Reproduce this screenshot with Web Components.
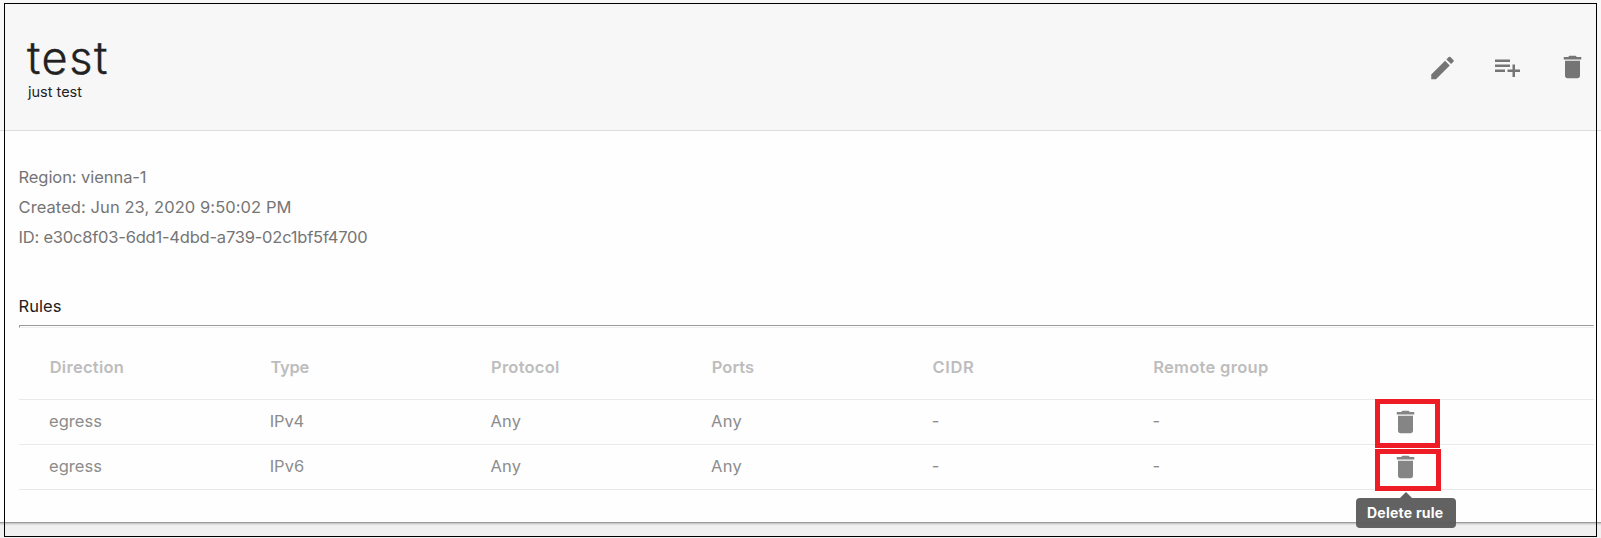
<!DOCTYPE html>
<html lang="en">
<head>
<meta charset="utf-8">
<title>Security group</title>
<style>
html,body{margin:0;height:538px;overflow:hidden;background:#f0f0f0}
body{font-family:Inter,"Open Sans","Liberation Sans",sans-serif;color:#212121}
</style>
</head>
<body>
<group-page></group-page>
<script>
const define = (name, html, ready) => customElements.define(name, class extends HTMLElement {
  connectedCallback() {
    if (this.shadowRoot) return;
    const t = document.createElement('template');
    t.innerHTML = html;
    this.attachShadow({mode: 'open'}).append(t.content.cloneNode(true));
    if (ready) ready(this, this.shadowRoot);
  }
});

// Text tracked so that it fills the width given in its "w" attribute.
define('fit-text', `<style>:host{display:block;white-space:nowrap}span{display:inline-block}</style><span><slot></slot></span>`, (el, root) => {
  const s = root.querySelector('span');
  const n = Number(el.getAttribute('n')) || el.textContent.length, w = parseFloat(el.getAttribute('w'));
  if (w) s.style.letterSpacing = ((w - s.getBoundingClientRect().width) / n).toFixed(3) + 'px';
});

const ICONS = {
  edit: 'M3 17.25V21h3.75L17.81 9.94l-3.75-3.75L3 17.25zM20.71 7.04a1 1 0 0 0 0-1.41l-2.34-2.34a1 1 0 0 0-1.41 0l-1.83 1.83 3.75 3.75 1.83-1.83z',
  add: 'M14 10H2v2h12v-2zm0-4H2v2h12V6zm4 8v-4h-2v4h-4v2h4v4h2v-4h4v-2h-4zM2 16h8v-2H2v2z',
  delete: 'M6 19c0 1.1.9 2 2 2h8c1.1 0 2-.9 2-2V7H6v12zM19 4h-3.5l-1-1h-5l-1 1H5v2h14V4z'
};
define('md-icon', `<style>:host{display:block;width:30px;height:30px}svg{display:block;overflow:visible}</style><svg width="30" height="30" viewBox="0 0 24 24" fill="currentColor"><path/></svg>`, (el, root) => {
  const p = root.querySelector('path');
  p.setAttribute('d', ICONS[el.getAttribute('name')]);
  p.setAttribute('transform', 'translate(.4 0)');
});

define('group-header', `<style>
:host{display:flex;justify-content:space-between;box-sizing:border-box;height:131px;padding:32px 14px 0 27px;background:#f7f7f7;border-bottom:1px solid #ddd}
.title{font-size:45px;line-height:51px;height:50px;font-weight:300;-webkit-text-stroke:.4px #212121}
.sub{font-size:14.5px;line-height:20px;padding-left:1px}
.actions{display:flex;gap:35px;color:#757575;padding-top:20px}
.actions md-icon:first-child{margin-top:1px}
</style>
<div><fit-text class="title" w="82">test</fit-text><fit-text class="sub" w="54">just test</fit-text></div>
<div class="actions"><md-icon name="edit"></md-icon><md-icon name="add"></md-icon><md-icon name="delete"></md-icon></div>`);

define('group-facts', `<style>:host{display:block;padding:31px 0 0 18.5px;font-size:16.5px;line-height:30px;color:#757575}</style>
<fit-text w="128">Region: vienna-1</fit-text>
<fit-text w="273">Created: Jun 23, 2020 9:50:02 PM</fit-text>
<fit-text w="349">ID: e30c8f03-6dd1-4dbd-a739-02c1bf5f4700</fit-text>`);

define('tool-tip', `<style>
:host{position:absolute;z-index:2;left:50%;width:100px;height:30px;margin-left:-49px;box-sizing:border-box;padding-left:11px;border-radius:4px;background:rgba(90,90,90,.95);color:#fff;font-size:14px;font-weight:700;line-height:30px}
:host::before{content:"";position:absolute;left:44px;top:-6px;border:6px solid transparent;border-top:0;border-bottom-color:#616161}
</style><fit-text w="76.5" n="11"><slot></slot></fit-text>`);

define('rule-row', `<style>
:host{display:grid;grid-template-columns:repeat(5,220.7px) 237.5px 30px;height:44px;padding-left:30px;border-bottom:1px solid #e9e9e9;font-size:16.5px;line-height:43px;color:#8c8c8c}
:host([head]){height:68px;line-height:73px;padding-left:30.7px;font-weight:600;color:#bdbdbd}
.act{position:relative;padding-top:7px;color:#858585}
.mark{position:absolute;box-sizing:border-box;border:5px solid #ee1c25;left:-15px;width:65px;top:-1px;height:49px}
:host([last]) .mark{width:66px;top:4px;height:42px}
tool-tip{top:53px}
</style>`, (el, root) => {
  const widths = el.getAttribute('widths').split(',');
  el.getAttribute('cells').split(',').forEach((c, i) => {
    const f = document.createElement('fit-text');
    f.setAttribute('w', widths[i]);
    f.textContent = c;
    root.append(f);
  });
  if (!el.hasAttribute('head')) {
    const a = document.createElement('div');
    a.className = 'act';
    a.innerHTML = '<md-icon name="delete"></md-icon><div class="mark"></div>' + (el.hasAttribute('last') ? '<tool-tip>Delete rule</tool-tip>' : '');
    root.append(a);
  }
});

define('rule-list', `<style>
:host{display:block;padding:39px 7px 0 19px}
h2{margin:0 0 0 -.5px;font-size:16.5px;font-weight:400;line-height:30px}
hr{margin:4px 0 3px;height:1px;border:1px solid;border-color:#999 #eee #eee #999}
</style>
<h2><fit-text w="43">Rules</fit-text></h2><hr>
<rule-row head cells="Direction,Type,Protocol,Ports,CIDR,Remote group" widths="74.5,38.5,68.5,42.5,42,115.5"></rule-row>
<rule-row cells="egress,IPv4,Any,Any,-,-" widths="53,34.5,31,31,6,6"></rule-row>
<rule-row last cells="egress,IPv6,Any,Any,-,-" widths="53,34.5,31,31,6,6"></rule-row>`);

define('group-page', `<style>
:host{display:block;position:relative;height:538px}
main{display:block;height:522px;background:#fefefe;border-bottom:1px solid #9c9c9c;box-shadow:0 1px 0 #c8c8c8,0 2px 1px #e0e0e0}
.frame{position:absolute;z-index:1;left:4px;top:3px;width:1591px;height:532px;border:1px solid #000;pointer-events:none}
</style>
<main><group-header></group-header><group-facts></group-facts><rule-list></rule-list></main>
<div class="frame"></div>`);
</script>
</body>
</html>
